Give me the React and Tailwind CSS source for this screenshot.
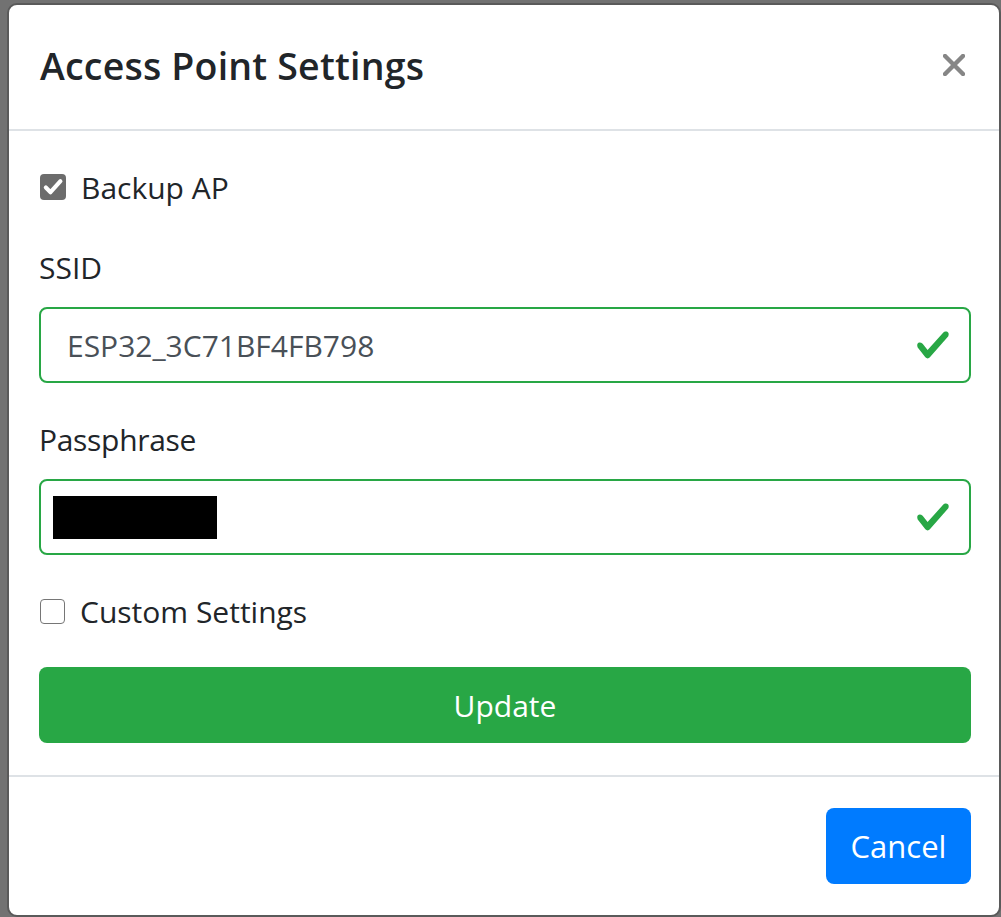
import React from 'react';

const font = { fontFamily: '"Open Sans", "Noto Sans", sans-serif' };

function ValidIcon() {
  return (
    <svg viewBox="0 0 8 8" className="w-[36px] h-[36px]">
      <path
        fill="#28a745"
        d="M2.3 6.73L.6 4.53c-.4-1.04.46-1.4 1.1-.8l1.1 1.4 3.4-3.8c.6-.63 1.6-.27 1.2.7l-4 4.6c-.43.5-.8.4-1.1.1z"
      />
    </svg>
  );
}

function CheckRow({ checked, label }) {
  return (
    <label className="flex items-center h-[48px] gap-[15px] pl-[1px]">
      {checked ? (
        <span className="w-[26px] h-[26px] rounded-[4px] bg-[#6c6c6c] flex items-center justify-center">
          <svg viewBox="0 0 16 16" className="w-[22px] h-[22px]">
            <path d="M2.8 8.4l3.4 3.4L13.4 3.8" fill="none" stroke="#fff" strokeWidth="3" strokeLinecap="round" strokeLinejoin="round" />
          </svg>
        </span>
      ) : (
        <span className="w-[25px] h-[25px] rounded-[4px] border-[1.5px] border-[#767676] bg-white" />
      )}
      <span className="text-[30px] text-[#212529]">{label}</span>
    </label>
  );
}

function ValidInput({ children }) {
  return (
    <div className="relative h-[76px] rounded-[8px] border-2 border-[#28a745] bg-white flex items-center pl-[26px]">
      {children}
      <span className="absolute right-[18px] top-[18px]">
        <ValidIcon />
      </span>
    </div>
  );
}

export default function App() {
  return (
    <div className="w-[1001px] h-[917px] bg-[#727272] pt-[3px] pl-[7px] overflow-hidden" style={font}>
      <div className="w-[994px] h-[914px] bg-white rounded-[10px] border-2 border-[#5a5a5a] flex flex-col">
        {/* Header */}
        <div className="h-[126px] shrink-0 border-b-2 border-[#dee2e6] flex items-center justify-between pl-[31px] pr-[34px]">
          <h5 className="text-[37.5px] font-semibold text-[#212529] leading-none -mt-[2px] tracking-[0.2px]">Access Point Settings</h5>
          <svg viewBox="0 0 22 22" className="w-[22px] h-[22px] -mt-[4px]">
            <path d="M2 2L20 20M20 2L2 20" stroke="#868686" strokeWidth="4.4" strokeLinecap="square" />
          </svg>
        </div>

        {/* Body */}
        <div className="pl-[30px] pr-[28px] pt-[32px] pb-[32px] border-b-2 border-[#dee2e6]">
          <CheckRow checked label="Backup AP" />

          <div className="mt-[32px]">
            <div className="h-[48px] flex items-center text-[30px] text-[#212529]">SSID</div>
            <div className="mt-[16px]">
              <ValidInput>
                <span className="text-[30px] text-[#495057]">ESP32_3C71BF4FB798</span>
              </ValidInput>
            </div>
          </div>

          <div className="mt-[32px]">
            <div className="h-[48px] flex items-center text-[30px] text-[#212529] tracking-[-0.3px]">Passphrase</div>
            <div className="mt-[16px]">
              <ValidInput>
                <span className="block w-[164px] h-[43px] bg-black -ml-[14px]" />
              </ValidInput>
            </div>
          </div>

          <div className="mt-[32px]">
            <CheckRow label="Custom Settings" />
          </div>

          <button className="mt-[32px] w-full h-[76px] rounded-[8px] bg-[#28a745] text-white text-[30px] flex items-center justify-center">
            Update
          </button>
        </div>

        {/* Footer */}
        <div className="flex justify-end pt-[31px] pr-[28px]">
          <button className="w-[145px] h-[76px] rounded-[8px] bg-[#007bff] text-white text-[31px] flex items-center justify-center">
            Cancel
          </button>
        </div>
      </div>
    </div>
  );
}
